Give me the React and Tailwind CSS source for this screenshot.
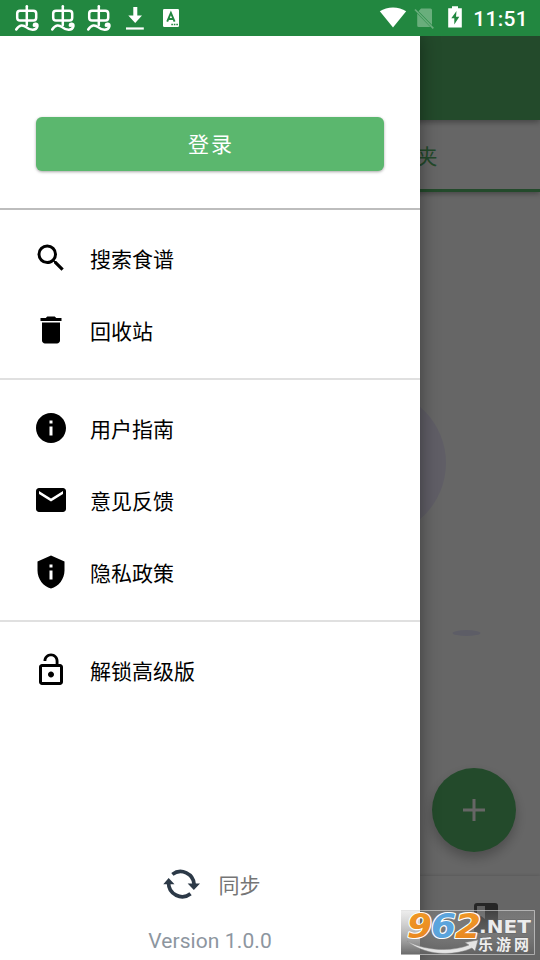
import {
  MdSearch,
  MdDelete,
  MdInfo,
  MdEmail,
  MdPrivacyTip,
  MdLockOpen,
} from "react-icons/md";

function BugIcon() {
  return (
    <svg width="26" height="28" viewBox="0 0 26 28" fill="none" stroke="#fff" strokeWidth="2.5" strokeLinecap="round" strokeLinejoin="round">
      <rect x="3.200" y="6.800" width="19" height="9.800" rx="2.800" />
      <path d="M12.800 2.200V21" />
      <path d="M2.200 25.500C5.500 20.500 9 20.500 12.500 23.400C16 26.500 22.200 27 23.400 22.400C23.900 19.500 19.800 18.800 19.900 21.400" />
      <circle cx="21" cy="21" r="1.300" fill="#fff" strokeWidth="1.500" />
    </svg>
  );
}

function StatusBar() {
  return (
    <header className="flex h-9 w-full shrink-0 items-center bg-[#228740] pl-3.5 text-white">
      <div className="flex items-center gap-2.5">
        <BugIcon />
        <BugIcon />
        <BugIcon />
      </div>
      <svg className="ml-[13px]" width="20" height="26" viewBox="0 0 20 26" fill="#fff">
        <path d="M8.300 2h4v8.500h4.700L10.200 18 3.300 10.500h5z" />
        <rect x="1" y="22.400" width="17.800" height="2.200" />
      </svg>
      <svg className="ml-[17px]" width="18" height="20" viewBox="0 0 18 20">
        <rect x="1" y="1" width="16" height="18" rx="1.200" fill="#fff" />
        <path d="M5.200 13.700 8.900 5l3.700 8.700M6.500 11h4.800" fill="none" stroke="#228740" strokeWidth="1.900" />
        <path d="M9.300 16.500h1.600m.9 0h1.600m.9 0h1.600" stroke="#228740" strokeWidth="1.400" />
      </svg>
      <div className="ml-auto flex items-center pr-3">
        <svg width="28" height="22" viewBox="0 0 28 22" fill="#fff">
          <path d="M14 20.600.800 4.200C8-.900 20-.900 27.200 4.200z" />
        </svg>
        <svg className="ml-1.5" width="22" height="22" viewBox="0 0 22 22">
          <path d="M8 1.500h9.500q1.500 0 1.500 1.500v15L5.500 4.200zM4.200 6.500 17.300 20H5.700Q4.200 20 4.200 18.500z" fill="#69ae7c" />
          <path d="M2 2.500 20.300 21.300" stroke="#69ae7c" strokeWidth="1.700" />
        </svg>
        <svg className="mb-0.5 ml-3" width="16" height="24" viewBox="0 0 16 24">
          <path d="M5 1.300h6v2h3.800V22.500H1.200V3.300H5z" fill="#fff" />
          <path d="M9.500 6 4.300 13.300h3v6.200l5-7.700H9z" fill="#228740" />
        </svg>
        <span className="ml-[10px] pt-0.5 font-['Roboto'] text-[21px] font-medium leading-9 tracking-[0.3px]">11:51</span>
      </div>
    </header>
  );
}

function BackgroundPage() {
  return (
    <div className="flex h-full w-full flex-col bg-white">
      <div className="z-10 h-[84px] shrink-0 bg-[#58b96b] shadow-[0_2px_6px_rgba(0,0,0,0.35)]" />
      <div className="flex h-[72px] shrink-0 justify-end shadow-[0_2px_5px_rgba(0,0,0,0.3)]">
        <div className="flex w-1/2 items-center justify-center border-b-[3px] border-[#58b96b] pl-0.5 pt-1.5 text-[21px] text-[#58b96b]">
          文件夹
        </div>
      </div>
      <div className="flex grow flex-col items-end">
        <svg className="mt-[190px]" width="250" height="270" viewBox="0 0 250 270">
          <ellipse cx="82" cy="81" rx="74" ry="74" fill="#efecff" />
          <ellipse cx="176.500" cy="251" rx="14" ry="3" fill="#e9e9ff" />
        </svg>
        <div className="mr-6 mt-[116px] flex h-[84px] w-[84px] items-center justify-center rounded-full bg-[#58b96b] shadow-[0_6px_12px_rgba(0,0,0,0.25)]">
          <svg width="22" height="22" viewBox="0 0 22 22" stroke="#fff" strokeWidth="3">
            <path d="M11 0v22M0 11h22" />
          </svg>
        </div>
      </div>
      <div className="flex h-[84px] shrink-0 justify-end pr-[42px] pt-[27px] shadow-[0_-1px_3px_rgba(0,0,0,0.12)]">
        <svg width="24" height="30" viewBox="0 0 24 30">
          <rect width="24" height="30" rx="3" fill="#606060" />
          <path d="M3 3h8v13l-4-3-4 3z" fill="#eee" />
        </svg>
      </div>
      <div className="absolute inset-0 z-10 bg-black/60" />
    </div>
  );
}

function MenuItem({ icon: Icon, label }) {
  return (
    <div className="flex h-[72px] items-center gap-[21px] pl-[33px] text-[21px] text-black">
      <Icon size={36} />
      <span className="pt-[3px] leading-9">{label}</span>
    </div>
  );
}

function Drawer() {
  return (
    <aside className="absolute inset-y-0 left-0 flex w-[420px] flex-col bg-white shadow-[0_0_18px_rgba(0,0,0,0.42)]">
      <div className="flex h-[174px] shrink-0 flex-col border-b-2 border-[#bdbdbd] px-9 pt-[81px]">
        <button className="h-[54px] rounded-md bg-[#5bb76e] pl-0.5 pt-1 text-[21px] tracking-[2px] text-white shadow-[0_1px_3px_rgba(0,0,0,0.35)]">
          登录
        </button>
      </div>
      <nav className="flex flex-col">
        <div className="border-b-2 border-[#e0e0e0] py-3">
          <MenuItem icon={MdSearch} label="搜索食谱" />
          <MenuItem icon={MdDelete} label="回收站" />
        </div>
        <div className="border-b-2 border-[#e0e0e0] py-3">
          <MenuItem icon={MdInfo} label="用户指南" />
          <MenuItem icon={MdEmail} label="意见反馈" />
          <MenuItem icon={MdPrivacyTip} label="隐私政策" />
        </div>
        <div className="py-3">
          <MenuItem icon={MdLockOpen} label="解锁高级版" />
        </div>
      </nav>
      <footer className="mt-auto flex flex-col items-center pb-[3px]">
        <div className="flex items-center gap-[19px] pl-[3px] text-[21px] text-[#757575]">
          <svg width="37" height="34" viewBox="0 0 38 34" fill="none" stroke="#2c3947" strokeWidth="3.800">
            <path d="M9.600 7.100A14 14 0 0 1 32 17.500" />
            <path d="M28.300 27A14 14 0 0 1 5.700 16" />
            <path d="M25.300 16.500H38L31.700 23.200z M.300 17.200H11.800L5.800 10.800z" fill="#2c3947" stroke="none" />
          </svg>
          <span className="pt-1 leading-8">同步</span>
        </div>
        <div className="mt-[23px] font-['Roboto'] text-[21px] leading-8 tracking-[0.1px] text-[#8d969f]">Version 1.0.0</div>
      </footer>
    </aside>
  );
}

function Watermark() {
  return (
    <svg className="absolute bottom-1 right-1" width="136" height="48" viewBox="0 0 136 48">
      <defs>
        <linearGradient id="plate" x1="0" y1="0" x2="0" y2="1">
          <stop offset="0" stopColor="#aaa" stopOpacity="0.2" />
          <stop offset="1" stopColor="#606060" stopOpacity="0.95" />
        </linearGradient>
        <linearGradient id="orange" x1="0" y1="0" x2="0" y2="1">
          <stop offset="0" stopColor="#f09a28" />
          <stop offset="1" stopColor="#e8851f" />
        </linearGradient>
      </defs>
      <rect x="1" y="2" width="134" height="45" fill="url(#plate)" />
      <path d="M1 2.500H134.500V46.500H1" fill="none" stroke="#ddd" strokeOpacity="0.6" />
      <path d="M7 33C25 43 52 44 69 37L65 34.500 78 32 75 43 72 40C52 49 24 47 7 33z" fill="#e4e4e4" stroke="#888" strokeWidth="0.500" />
      <g fontFamily="DejaVu Sans" fontWeight="700" fontStyle="italic" fontSize="33" stroke="#fff" strokeWidth="2.200" paintOrder="stroke" strokeLinejoin="round">
        <text x="7" y="29.500" textLength="25" lengthAdjust="spacingAndGlyphs" fill="url(#orange)">9</text>
        <text x="31" y="29.500" textLength="25" lengthAdjust="spacingAndGlyphs" fill="#5ba4dc">6</text>
        <text x="55" y="29.500" textLength="26" lengthAdjust="spacingAndGlyphs" fill="url(#orange)">2</text>
      </g>
      <text x="79" y="25" textLength="52" lengthAdjust="spacingAndGlyphs" fontFamily="DejaVu Sans" fontWeight="700" fontSize="18.500" fill="#ececec" stroke="#666" strokeWidth="1" paintOrder="stroke">.NET</text>
      <text x="78" y="42" textLength="51" fontFamily="Noto Sans CJK SC" fontWeight="700" fontSize="15" fill="#eee" stroke="#666" strokeWidth="1" paintOrder="stroke">乐游网</text>
    </svg>
  );
}

export default function App() {
  return (
    <div className="relative flex h-[960px] w-[540px] flex-col overflow-hidden font-['Roboto','Noto_Sans_CJK_SC',sans-serif]">
      <StatusBar />
      <main className="relative grow overflow-hidden">
        <BackgroundPage />
        <div className="absolute inset-0 z-20">
          <Drawer />
        </div>
      </main>
      <div className="absolute inset-0 z-30">
        <Watermark />
      </div>
    </div>
  );
}
